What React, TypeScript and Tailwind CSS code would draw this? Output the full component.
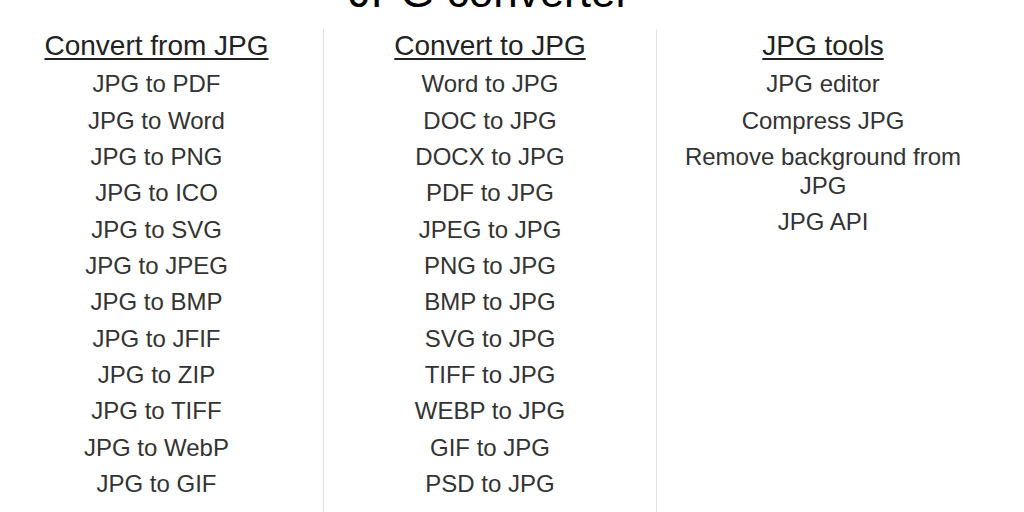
import React from 'react';

const columns: { title: string; items: string[] }[] = [
  {
    title: 'Convert from JPG',
    items: [
      'JPG to PDF',
      'JPG to Word',
      'JPG to PNG',
      'JPG to ICO',
      'JPG to SVG',
      'JPG to JPEG',
      'JPG to BMP',
      'JPG to JFIF',
      'JPG to ZIP',
      'JPG to TIFF',
      'JPG to WebP',
      'JPG to GIF',
      'JPG to PSD',
    ],
  },
  {
    title: 'Convert to JPG',
    items: [
      'Word to JPG',
      'DOC to JPG',
      'DOCX to JPG',
      'PDF to JPG',
      'JPEG to JPG',
      'PNG to JPG',
      'BMP to JPG',
      'SVG to JPG',
      'TIFF to JPG',
      'WEBP to JPG',
      'GIF to JPG',
      'PSD to JPG',
      'JFIF to JPG',
    ],
  },
  {
    title: 'JPG tools',
    items: ['JPG editor', 'Compress JPG', 'Remove background from JPG', 'JPG API'],
  },
];

const App: React.FC = () => {
  return (
    <div className="h-[512px] overflow-hidden bg-white font-['Liberation_Sans',Arial,sans-serif]">
      <div className="ml-[-10px] w-[999px]">
        <h1 className="-mt-[34px] text-center text-[44px] leading-[1.2] text-black">JPG converter</h1>
        <div className="mt-[10px] grid grid-cols-3">
          {columns.map((col, i) => (
            <div
              key={col.title}
              className={`flex flex-col items-center px-[16px] text-center ${i > 0 ? 'border-l border-[#e3e3e3]' : ''}`}
            >
              <a
                href="#"
                className="mb-[8px] text-[28px] leading-[1.2] text-[#222] underline decoration-2 underline-offset-[3px]"
              >
                {col.title}
              </a>
              <ul>
                {col.items.map((item) => (
                  <li key={item} className="pb-[7.56px] text-[24px] leading-[28.8px] text-[#333]">
                    <a href="#">{item}</a>
                  </li>
                ))}
              </ul>
            </div>
          ))}
        </div>
      </div>
    </div>
  );
};

export default App;
